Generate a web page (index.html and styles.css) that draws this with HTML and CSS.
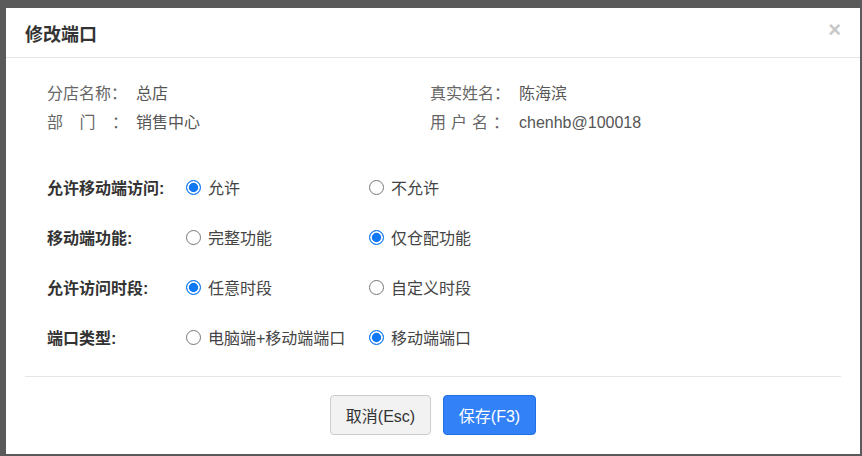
FILE: index.html
```html
<!DOCTYPE html>
<html>
<head>
  <meta charset="UTF-8">
  <title>修改端口</title>
  <link rel="stylesheet" href="styles.css">
</head>
<body>
  <div class="mask">
    <div class="dialog">
      <div class="dialog-header">
        <h3>修改端口</h3>
        <span class="close">×</span>
      </div>

      <div class="info">
        <div class="info-item">
          <span class="info-label">分店名称：</span>
          <span class="info-value">总店</span>
        </div>
        <div class="info-item">
          <span class="info-label">真实姓名：</span>
          <span class="info-value">陈海滨</span>
        </div>
        <div class="info-item">
          <span class="info-label"><span class="spread-wide">部门</span>：</span>
          <span class="info-value">销售中心</span>
        </div>
        <div class="info-item">
          <span class="info-label"><span class="spread">用户名</span>：</span>
          <span class="info-value">chenhb@100018</span>
        </div>
      </div>

      <div class="form">
        <div class="form-row">
          <span class="form-label">允许移动端访问:</span>
          <label class="radio"><input type="radio" name="mobile" checked> 允许</label>
          <label class="radio"><input type="radio" name="mobile"> 不允许</label>
        </div>
        <div class="form-row">
          <span class="form-label">移动端功能:</span>
          <label class="radio"><input type="radio" name="func"> 完整功能</label>
          <label class="radio"><input type="radio" name="func" checked> 仅仓配功能</label>
        </div>
        <div class="form-row">
          <span class="form-label">允许访问时段:</span>
          <label class="radio"><input type="radio" name="time" checked> 任意时段</label>
          <label class="radio"><input type="radio" name="time"> 自定义时段</label>
        </div>
        <div class="form-row">
          <span class="form-label">端口类型:</span>
          <label class="radio"><input type="radio" name="type"> 电脑端+移动端端口</label>
          <label class="radio"><input type="radio" name="type" checked> 移动端端口</label>
        </div>
      </div>

      <div class="dialog-footer">
        <button class="btn btn-default">取消(Esc)</button>
        <button class="btn btn-primary">保存(F3)</button>
      </div>
    </div>
  </div>
</body>
</html>
```

FILE: styles.css
```css
html, body {
  margin: 0;
  padding: 0;
}
body {
  font-family: 'Liberation Sans', 'Noto Sans CJK SC', sans-serif;
  font-size: 16px;
  color: #333;
  background-color: #5a5a5a;
}
.mask {
  box-sizing: border-box;
  height: 456px;
  padding: 8px 2px 2px 6px;
  background-color: #5a5a5a;
  overflow: hidden;
}
.dialog {
  background-color: white;
  height: 446px;
}
.dialog-header {
  display: flex;
  justify-content: space-between;
  align-items: center;
  height: 49px;
  padding: 0 19px;
  border-bottom: 1px solid #e5e5e5;
}
.dialog-header h3 {
  margin: 0;
  font-size: 18px;
  font-weight: bold;
  color: #333;
}
.close {
  font-size: 22px;
  font-weight: bold;
  color: #c8c8c8;
  margin-top: -6px;
  cursor: pointer;
}
.info {
  display: grid;
  grid-template-columns: 383px 1fr;
  padding: 21px 41px 0;
}
.info-item {
  display: flex;
  line-height: 29px;
  color: #666;
}
.info-label {
  width: 89px;
  flex-shrink: 0;
  white-space: nowrap;
}
.spread-wide {
  letter-spacing: 16.5px;
}
.spread {
  letter-spacing: 5px;
}
.info-value {
  color: #555;
}
.form {
  padding: 25px 41px 0;
}
.form-row {
  display: flex;
  align-items: center;
  height: 50px;
}
.form-label {
  width: 139px;
  flex-shrink: 0;
  font-weight: bold;
  color: #333;
}
.radio {
  width: 183px;
  display: flex;
  align-items: center;
  gap: 7px;
  color: #444;
  white-space: nowrap;
  cursor: pointer;
}
.radio input {
  appearance: none;
  box-sizing: border-box;
  width: 15px;
  height: 15px;
  margin: 0;
  border: 1.5px solid #767676;
  border-radius: 50%;
  background-color: white;
}
.radio input:checked {
  border: 1.5px solid #0f78f5;
  background-color: #0f78f5;
  box-shadow: inset 0 0 0 1.8px white;
}
.dialog-footer {
  margin: 14px 19px 0;
  border-top: 1px solid #e5e5e5;
  padding: 18px 0;
  display: flex;
  justify-content: center;
  gap: 12px;
}
.btn {
  height: 40px;
  padding: 0;
  font-family: inherit;
  font-size: 16px;
  border-radius: 4px;
  cursor: pointer;
}
.btn-default {
  width: 101px;
  background-color: #f2f2f2;
  color: #333;
  border: 1px solid #ccc;
}
.btn-primary {
  width: 93px;
  background-color: #3381f6;
  color: white;
  border: 1px solid #1f6fe5;
}
```
